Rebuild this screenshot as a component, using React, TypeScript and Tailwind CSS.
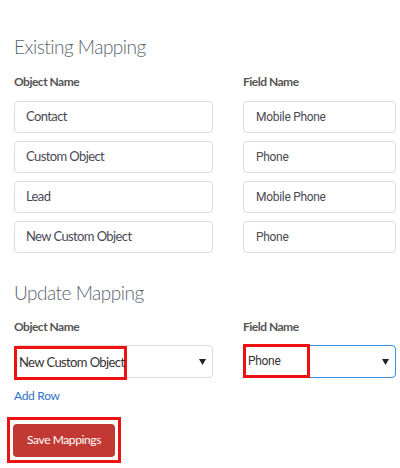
import React from 'react';

const existing = [
  { object: 'Contact', field: 'Mobile Phone' },
  { object: 'Custom Object', field: 'Phone' },
  { object: 'Lead', field: 'Mobile Phone' },
  { object: 'New Custom Object', field: 'Phone' },
];

const Arrow = () => (
  <svg width="7" height="6" viewBox="0 0 7 6" className="absolute right-[6px] top-[13px]">
    <path d="M0 0 H7 L3.5 6 Z" fill="#222" />
  </svg>
);

const labelCls = 'text-[12px] leading-[16px] font-bold text-[#555] tracking-[-0.5px]';
const headCls = 'text-[19px] leading-[28px] font-light text-[#5c6370] tracking-[-0.5px]';

const App = () => {
  return (
    <div className="w-[400px] h-[468px] bg-white pl-[14px] pt-[33px]" style={{ fontFamily: 'Lato, "Open Sans", sans-serif' }}>
      <h2 className={headCls}>Existing Mapping</h2>
      <div className="flex gap-[30px] mt-[13px]">
        <div className="w-[199px]">
          <div className={labelCls}>Object Name</div>
          <div className="flex flex-col gap-[8px] mt-[11px]">
            {existing.map((row) => (
              <div key={row.object} className="h-[32px] border border-[#dcdcdc] rounded-[4px] px-[11px] flex items-center text-[13px] tracking-[-0.6px] text-[#4a4a55]">
                {row.object}
              </div>
            ))}
          </div>
        </div>
        <div className="w-[153px]">
          <div className={labelCls}>Field Name</div>
          <div className="flex flex-col gap-[8px] mt-[11px]" style={{ fontFamily: 'Roboto, sans-serif' }}>
            {existing.map((row, i) => (
              <div key={i} className="h-[32px] border border-[#dcdcdc] rounded-[4px] px-[12px] flex items-center text-[12px] tracking-[-0.3px] text-[#4a4a55]">
                {row.field}
              </div>
            ))}
          </div>
        </div>
      </div>

      <h2 className={`${headCls} mt-[26px]`}>Update Mapping</h2>
      <div className="flex gap-[30px] mt-[12px]">
        <div className="w-[199px]">
          <div className={labelCls}>Object Name</div>
          <div className="relative mt-[10px] h-[33px] border border-[#dcdcdc] rounded-[4px]">
            <div className="absolute -left-px top-0 w-[113px] h-[34px] border-[3px] border-[#ee1111] flex items-center pl-[2px] whitespace-nowrap text-[13px] tracking-[-0.6px] text-[#333]">
              New Custom Object
            </div>
            <Arrow />
          </div>
          <div className="mt-[10px] text-[12px] leading-[16px] tracking-[-0.3px] text-[#2f72c4]">Add Row</div>
        </div>
        <div className="w-[153px]">
          <div className={labelCls}>Field Name</div>
          <div className="relative mt-[10px] h-[33px] border border-[#3c8ce6] rounded-[4px]" style={{ fontFamily: 'Roboto, sans-serif' }}>
            <div className="absolute -left-px -top-[2px] w-[67px] h-[34px] border-[3px] border-[#ee1111] flex items-center pl-[2px] text-[12px] tracking-[-0.3px] text-[#333]">
              Phone
            </div>
            <Arrow />
          </div>
        </div>
      </div>

      <div className="mt-[13px] ml-[-7px] w-[114px] h-[46px] border-[3px] border-[#ee1111] flex items-center justify-center">
        <button className="w-[102px] h-[33px] rounded-[4px] bg-[#c23934] text-white text-[12px] tracking-[-0.4px]">Save Mappings</button>
      </div>
    </div>
  );
};

export default App;
